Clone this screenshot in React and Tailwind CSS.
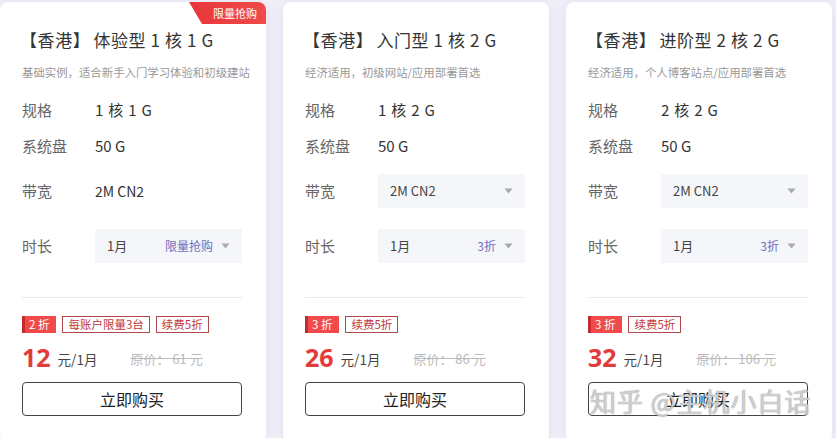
import React from 'react';

const plans = [
    {
        title: '体验型 1 核 1 G',
        desc: '基础实例，适合新手入门学习体验和初级建站',
        spec: '1 核 1 G',
        bandwidthSelect: false,
        durationTag: '限量抢购',
        discount: '2 折',
        tags: ['每账户限量3台', '续费5折'],
        price: '12',
        original: '61',
        badge: true,
    },
    {
        title: '入门型 1 核 2 G',
        desc: '经济适用，初级网站/应用部署首选',
        spec: '1 核 2 G',
        bandwidthSelect: true,
        durationTag: '3折',
        discount: '3 折',
        tags: ['续费5折'],
        price: '26',
        original: '86',
    },
    {
        title: '进阶型 2 核 2 G',
        desc: '经济适用，个人博客站点/应用部署首选',
        spec: '2 核 2 G',
        bandwidthSelect: true,
        durationTag: '3折',
        discount: '3 折',
        tags: ['续费5折'],
        price: '32',
        original: '106',
    },
];

const Caret = () => (
    <svg width="9" height="6" viewBox="0 0 9 6" className="ml-2">
        <path d="M0.5 0.5 H8.5 L4.5 5.5 Z" fill="#a8a8b0" />
    </svg>
);

function Select({ value, tag }) {
    return (
        <div className="flex items-center w-[147px] h-[34px] bg-[#f5f6fa] px-3 text-[13px] text-[#444]">
            <span>{value}</span>
            <span className="ml-auto text-[12px] text-[#6e6fc0]">{tag}</span>
            <Caret />
        </div>
    );
}

function Card({ plan }) {
    return (
        <div className="relative w-[266px] h-[440px] shrink-0 bg-white rounded-lg shadow-[0_2px_14px_rgba(110,110,190,0.12)] pl-[22px] pr-[24px] pt-[26px]">
            {plan.badge && (
                <div className="absolute right-0 top-0 w-[77px] h-[22px] rounded-tr-lg bg-gradient-to-r from-[#e8363c] to-[#ef4a4a] [clip-path:polygon(0_0,100%_0,100%_100%,13px_100%)] flex items-center justify-end pr-[9px] text-[11px] text-white">
                    限量抢购
                </div>
            )}

            {/* title */}
            <div className="h-6 flex items-center text-[17px] tracking-[0.6px] text-[#333] whitespace-nowrap">
                <span className="-ml-[2px]">【香港】</span>
                <span className="ml-[3px]">{plan.title}</span>
            </div>
            <div className="mt-3 h-4 leading-4 text-[11.4px] text-[#999] whitespace-nowrap">{plan.desc}</div>

            {/* specs */}
            <div className="mt-[19px] h-[22px] flex items-center text-[15px]">
                <span className="w-[73px] text-[#666]">规格</span>
                <span className="text-[#333] tracking-[0.8px]">{plan.spec}</span>
            </div>
            <div className="mt-[14px] h-[22px] flex items-center text-[15px]">
                <span className="w-[73px] text-[#666]">系统盘</span>
                <span className="text-[#333]">50 G</span>
            </div>
            <div className="mt-[17px] h-[34px] flex items-center text-[15px]">
                <span className="w-[73px] text-[#666]">带宽</span>
                {plan.bandwidthSelect ? (
                    <div className="flex items-center w-[147px] h-[34px] bg-[#f5f6fa] px-3 text-[13px] text-[#444]">
                        <span>2M CN2</span>
                        <span className="ml-auto"><Caret /></span>
                    </div>
                ) : (
                    <span className="text-[14px] text-[#333]">2M CN2</span>
                )}
            </div>
            <div className="mt-[21px] h-[34px] flex items-center text-[15px]">
                <span className="w-[73px] text-[#666]">时长</span>
                <Select value="1月" tag={plan.durationTag} />
            </div>

            <div className="mt-[34px] h-px bg-[#ebebef]" />

            {/* tags */}
            <div className="mt-[18px] flex items-center gap-[6px] text-[11.5px]">
                <span className="h-[17px] flex items-center bg-[#f04a4a] border-l-[3px] border-[#c72a2a] pl-[4px] pr-[7px] text-white">
                    {plan.discount}
                </span>
                {plan.tags.map((t) => (
                    <span key={t} className="h-[17px] flex items-center border border-[#b0474a] px-[5px] text-[#c0393c]">
                        {t}
                    </span>
                ))}
            </div>

            {/* price */}
            <div className="mt-[10px] h-[28px] flex items-end whitespace-nowrap">
                <span className="text-[25px] leading-[28px] font-bold text-[#e33b3b] font-['Open_Sans',sans-serif]">{plan.price}</span>
                <span className="ml-[7px] mb-[2px] text-[13.5px] text-[#444]">元/1月</span>
                <span className="ml-[33px] mb-[3px] text-[13px] text-[#bbb] line-through">原价： {plan.original} 元</span>
            </div>

            <button className="mt-[11px] w-[220px] h-[34px] rounded border border-[#444] bg-white text-[16px] text-[#222]">
                立即购买
            </button>
        </div>
    );
}

export default function App() {
    return (
        <div className="relative w-[836px] h-[438px] overflow-hidden bg-[#f0f0f8] font-['Noto_Sans_CJK_SC','Noto_Sans',sans-serif]">
            <div className="flex gap-[17px] pt-[2px]">
                {plans.map((p) => (
                    <Card key={p.title} plan={p} />
                ))}
            </div>
            <div className="absolute left-[590px] top-[381px] text-[26px] tracking-[1px] text-white/60 [text-shadow:0_0_1px_rgba(120,120,120,0.7),0_0_1px_rgba(120,120,120,0.7)] whitespace-nowrap">
                知乎 @主机小白话
            </div>
        </div>
    );
}
